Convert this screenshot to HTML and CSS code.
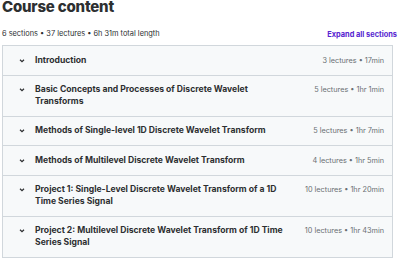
FILE: index.html
```html
<!DOCTYPE html>
<html lang="en">
<head>
    <meta charset="UTF-8">
    <meta name="viewport" content="width=device-width, initial-scale=1.0">
    <title>Course content</title>
    <link rel="stylesheet" href="styles.css">
</head>
<body>

    <div class="course">
        <h2 class="heading">Course content</h2>

        <div class="summary">
            <span>6 sections • 37 lectures • 6h 31m total length</span>
            <button class="expand">Expand all sections</button>
        </div>

        <div class="sections">
            <div class="section">
                <svg class="chevron" width="6" height="11" viewBox="0 0 6 11"><path d="M1 4.5 L3 6.5 L5 4.5"/></svg>
                <span class="section-title">Introduction</span>
                <span class="section-meta">3 lectures • 17min</span>
            </div>
            <div class="section">
                <svg class="chevron" width="6" height="11" viewBox="0 0 6 11"><path d="M1 4.5 L3 6.5 L5 4.5"/></svg>
                <span class="section-title">Basic Concepts and Processes of Discrete Wavelet Transforms</span>
                <span class="section-meta">5 lectures • 1hr 1min</span>
            </div>
            <div class="section">
                <svg class="chevron" width="6" height="11" viewBox="0 0 6 11"><path d="M1 4.5 L3 6.5 L5 4.5"/></svg>
                <span class="section-title">Methods of Single-level 1D Discrete Wavelet Transform</span>
                <span class="section-meta">5 lectures • 1hr 7min</span>
            </div>
            <div class="section">
                <svg class="chevron" width="6" height="11" viewBox="0 0 6 11"><path d="M1 4.5 L3 6.5 L5 4.5"/></svg>
                <span class="section-title">Methods of Multilevel Discrete Wavelet Transform</span>
                <span class="section-meta">4 lectures • 1hr 5min</span>
            </div>
            <div class="section">
                <svg class="chevron" width="6" height="11" viewBox="0 0 6 11"><path d="M1 4.5 L3 6.5 L5 4.5"/></svg>
                <span class="section-title">Project 1: Single-Level Discrete Wavelet Transform of a 1D Time Series Signal</span>
                <span class="section-meta">10 lectures • 1hr 20min</span>
            </div>
            <div class="section">
                <svg class="chevron" width="6" height="11" viewBox="0 0 6 11"><path d="M1 4.5 L3 6.5 L5 4.5"/></svg>
                <span class="section-title">Project 2: Multilevel Discrete Wavelet Transform of 1D Time Series Signal</span>
                <span class="section-meta">10 lectures • 1hr 43min</span>
            </div>
        </div>
    </div>

</body>
</html>
```

FILE: styles.css
```css
body { margin: 0; padding: 0 3px 0 2px; font-family: Inter, "Noto Sans", sans-serif; color: #2d2f31; background: #fff; }
.heading {
    margin: 0;
    font-size: 15px;
    line-height: 13px;
    font-weight: 800;
    letter-spacing: -0.2px;
}
.summary {
    display: flex;
    justify-content: space-between;
    align-items: center;
    margin-top: 16px;
    margin-bottom: 6px;
    font-size: 7.4px;
    line-height: 10px;
}
.expand {
    padding: 0;
    border: none;
    background: none;
    font-family: inherit;
    font-size: 7.4px;
    font-weight: 700;
    color: #5624d0;
    cursor: pointer;
}
.sections {
    margin-right: 4px;
    border: 1px solid #d1d7dc;
}
.section {
    display: flex;
    align-items: flex-start;
    padding: 8.5px 8px 8.5px 16px;
    background-color: #f7f9fa;
    line-height: 11.5px;
}
.section + .section { border-top: 1px solid #d1d7dc; }
/* chevron sits on the first line of the title */
.chevron {
    flex: none;
    height: 11.5px;
    margin-right: 10px;
}
.chevron path { fill: none; stroke: #2d2f31; stroke-width: 1.2; }
.section-title {
    flex: 1;
    max-width: 257px;
    font-size: 8.6px;
    font-weight: 700;
}
.section-meta {
    flex: none;
    margin-left: auto;
    padding-left: 10px;
    font-size: 7.3px;
    color: #6a6f73;
    white-space: nowrap;
}
```
